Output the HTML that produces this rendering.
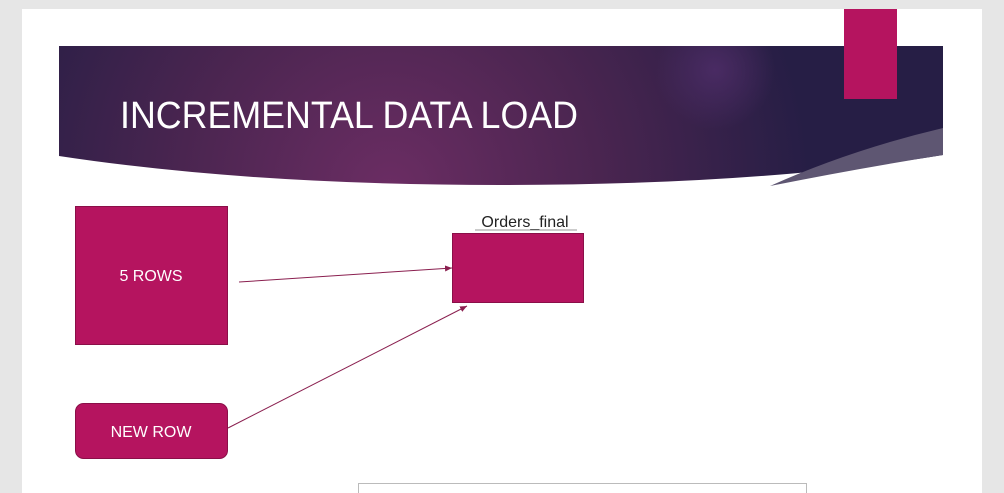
<!DOCTYPE html><html><head><style>body{margin:0;width:1004px;height:493px;background:#e6e6e6;overflow:hidden;font-family:"Liberation Sans",sans-serif}</style></head><body>
<svg width="1004" height="493" style="position:absolute;left:0;top:0">
<defs>
<radialGradient id="g" cx="390" cy="190" r="420" gradientUnits="userSpaceOnUse"><stop offset="0" stop-color="#6b2d63"/><stop offset="0.5" stop-color="#4a2550"/><stop offset="1" stop-color="#261e45"/></radialGradient>
<radialGradient id="g2" cx="715" cy="70" r="60" gradientUnits="userSpaceOnUse"><stop offset="0" stop-color="#4c2c66" stop-opacity="0.9"/><stop offset="1" stop-color="#4c2c66" stop-opacity="0"/></radialGradient>
<marker id="a" markerWidth="8" markerHeight="8" refX="7" refY="4" orient="auto" markerUnits="userSpaceOnUse"><path d="M0,1 L7,4 L0,7z" fill="#8a1f4f"/></marker>
</defs>
<rect x="22" y="9" width="960" height="484" fill="#fff"/>
<path d="M59,46 H943 V155 Q760,185 500,185 Q250,185 59,156 Z" fill="url(#g)"/>
<path d="M59,46 H943 V155 Q760,185 500,185 Q250,185 59,156 Z" fill="url(#g2)"/>
<path d="M943,128 Q850,150 770,186 Q860,168 943,155 Z" fill="#5e5672"/>
<rect x="844" y="9" width="53" height="90" fill="#b5145f"/>
<text x="120" y="128" font-size="38" fill="#fff" textLength="458" lengthAdjust="spacingAndGlyphs" font-family="Liberation Sans" style="font-weight:300">INCREMENTAL DATA LOAD</text>
<rect x="75.5" y="206.5" width="152" height="138" fill="#b5145f" stroke="#8a0f48"/>
<text x="151" y="281" font-size="16" fill="#fff" text-anchor="middle">5 ROWS</text>
<rect x="452.5" y="233.5" width="131" height="69" fill="#b5145f" stroke="#8a0f48"/>
<text x="525" y="227" font-size="16" fill="#222" text-anchor="middle">Orders_final</text>
<line x1="475" y1="230" x2="577" y2="230" stroke="#999" stroke-width="1"/>
<rect x="75.5" y="403.5" width="152" height="55" rx="8" fill="#b5145f" stroke="#8a0f48"/>
<text x="151" y="437" font-size="16" fill="#fff" text-anchor="middle">NEW ROW</text>
<line x1="239" y1="282" x2="452" y2="268" stroke="#8a1f4f" marker-end="url(#a)"/>
<line x1="228" y1="428" x2="467" y2="306" stroke="#8a1f4f" marker-end="url(#a)"/>
<rect x="358.5" y="483.5" width="448" height="20" fill="#fff" stroke="#bbb"/>
</svg>
</body></html>
